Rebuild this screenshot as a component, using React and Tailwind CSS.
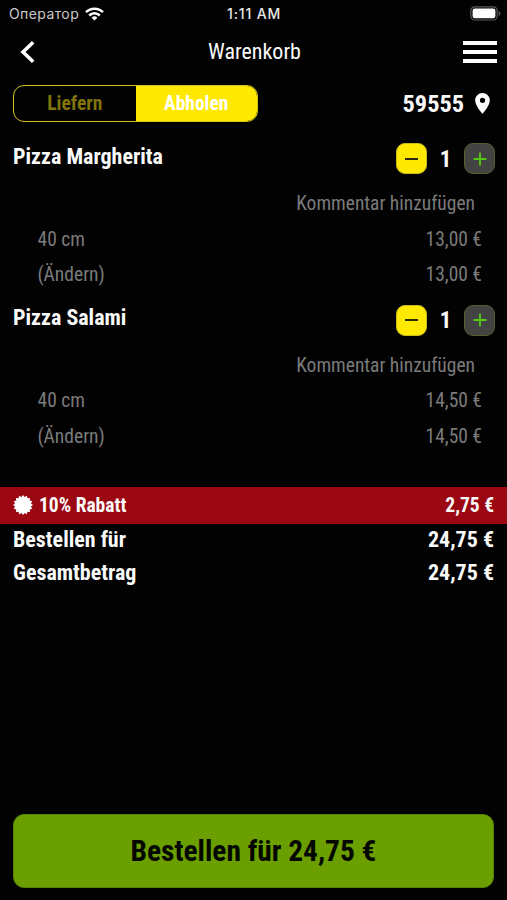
const items = [
  { name: "Pizza Margherita", price: "13,00 €" },
  { name: "Pizza Salami", price: "14,50 €" },
];

function StatusBar() {
  return (
    <div className="flex h-[27px] items-center justify-between pl-[9px] pr-[6px] font-[Inter,sans-serif] text-[13px] leading-[26px]">
      <div className="flex w-[160px] items-center gap-[6px] text-[#c9c9c9]">
        <span className="text-[14px] tracking-[0.4px]">Оператор</span>
        <svg width="19" height="14" viewBox="0 0 19 14" fill="none" stroke="white" strokeWidth="2.5">
          <path d="M1 5.2a12 12 0 0 1 17 0" />
          <path d="M4.2 8.5a7.5 7.5 0 0 1 10.6 0" />
          <path d="M9.5 13.6l-2.9-2.9a4.1 4.1 0 0 1 5.8 0z" fill="white" stroke="none" />
        </svg>
      </div>
      <span className="-ml-[2px] text-[14px] font-medium tracking-[0.85px] text-[#e8e8e8]">1:11 AM</span>
      <div className="flex w-[160px] justify-end">
        <svg width="31" height="15" viewBox="0 0 31 15">
          <rect x="0.8" y="0.8" width="26.4" height="13.2" rx="4" fill="none" stroke="#5c5c5c" strokeWidth="1.2" />
          <rect x="2.6" y="2.6" width="22.8" height="9.6" rx="2.2" fill="white" />
          <path d="M28.6 5v5c1.1-.4 1.8-1.4 1.8-2.5s-.7-2.1-1.8-2.5z" fill="#5c5c5c" />
        </svg>
      </div>
    </div>
  );
}

function Item({ name, price }) {
  return (
    <section className="h-[161.5px]">
      <div className="flex h-[31px] items-center justify-between pl-[13px] pr-[12px]">
        <h2 className="-mt-[4px] text-[22px] font-bold leading-[26px]">{name}</h2>
        <div className="flex items-center">
          <button className="flex h-[31px] w-[31px] items-center justify-center rounded-[9px] border border-[#c9bb20] bg-[#ffe900]">
            <span className="h-[2px] w-[13px] bg-[#2a2708]" />
          </button>
          <span className="w-[37px] pt-px text-center text-[23px] font-bold leading-[31px]">1</span>
          <button className="flex h-[31px] w-[31px] items-center justify-center rounded-[9px] border border-[#55602c] bg-[#434343]">
            <svg width="14" height="14" viewBox="0 0 14 14" stroke="#58c812" strokeWidth="1.8">
              <path d="M7 0.5v13M0.5 7h13" />
            </svg>
          </button>
        </div>
      </div>
      <div className="pl-[37.5px] pr-[25px] pt-[12px] text-[19.5px] leading-[35.5px] text-[#7b7b7b]">
        <div className="pr-[7px] text-right">Kommentar hinzufügen</div>
        <div className="flex justify-between"><span>40 cm</span><span>{price}</span></div>
        <div className="flex justify-between"><span>(Ändern)</span><span>{price}</span></div>
      </div>
    </section>
  );
}

const badgePoints = Array.from({ length: 32 }, (_, i) => {
  const r = i % 2 ? 8.1 : 10;
  const a = (i * Math.PI) / 16;
  return `${10 + r * Math.sin(a)},${10 - r * Math.cos(a)}`;
}).join(" ");

export default function App() {
  return (
    <main className="flex h-[900px] w-[507px] flex-col overflow-hidden bg-[#020202] font-['Roboto_Condensed',Roboto,sans-serif] text-[#fafafa] [font-stretch:75%]">
      <StatusBar />
      <header className="flex h-[49px] items-center justify-between pl-[20px] pr-[10px]">
        <div className="w-[26px]">
          <svg width="15" height="22" viewBox="0 0 15 22" fill="none" stroke="white" strokeWidth="3.6">
            <path d="M13.2 1.3L3 11l10.2 9.7" />
          </svg>
        </div>
        <h1 className="text-[22px] font-normal leading-[49px]">Warenkorb</h1>
        <div className="flex w-[34px] flex-col gap-[5px]">
          <span className="h-[4px] bg-white" />
          <span className="h-[4px] bg-white" />
          <span className="h-[4px] bg-white" />
        </div>
      </header>
      <div className="mt-[9px] flex h-[37px] items-center justify-between pl-[13px] pr-[17px]">
        <div className="flex h-[37px] w-[245px] overflow-hidden rounded-[11px] border border-[#d3c219] text-[19.5px] font-bold leading-[35px]">
          <span className="flex-1 text-center text-[#80740a]">Liefern</span>
          <span className="flex-1 bg-[#ffe900] text-center text-white">Abholen</span>
        </div>
        <div className="flex items-center gap-[11px]">
          <span className="text-[24.3px] font-bold leading-[36px]">59555</span>
          <svg width="15" height="21" viewBox="5 2 14 20" fill="white">
            <path d="M12 2C8.13 2 5 5.13 5 9c0 5.25 7 13 7 13s7-7.75 7-13c0-3.87-3.13-7-7-7zm0 9.5a2.5 2.5 0 1 1 0-5 2.5 2.5 0 0 1 0 5z" />
          </svg>
        </div>
      </div>
      <div className="mt-[21px] h-[344px]">
        {items.map((item) => <Item key={item.name} name={item.name} price={item.price} />)}
      </div>
      <div className="flex h-[37px] items-center justify-between bg-[#9b0812] px-[13px] text-[19.5px] font-bold">
        <div className="flex items-center gap-[6px]">
          <svg className="-mt-[2px]" width="20" height="20" viewBox="0 0 20 20"><polygon points={badgePoints} fill="white" /></svg>
          <span>10% Rabatt</span>
        </div>
        <span>2,75 €</span>
      </div>
      <div className="-mt-px px-[13px] text-[22px] font-bold leading-[33px]">
        <div className="flex justify-between"><span>Bestellen für</span><span>24,75 €</span></div>
        <div className="flex justify-between"><span>Gesamtbetrag</span><span>24,75 €</span></div>
      </div>
      <button className="mx-[13px] mb-[12px] mt-auto h-[74px] rounded-[11px] border border-[#578208] bg-[#6b9f00] text-[29.4px] font-bold text-[#050800]">
        Bestellen für 24,75 €
      </button>
    </main>
  );
}
